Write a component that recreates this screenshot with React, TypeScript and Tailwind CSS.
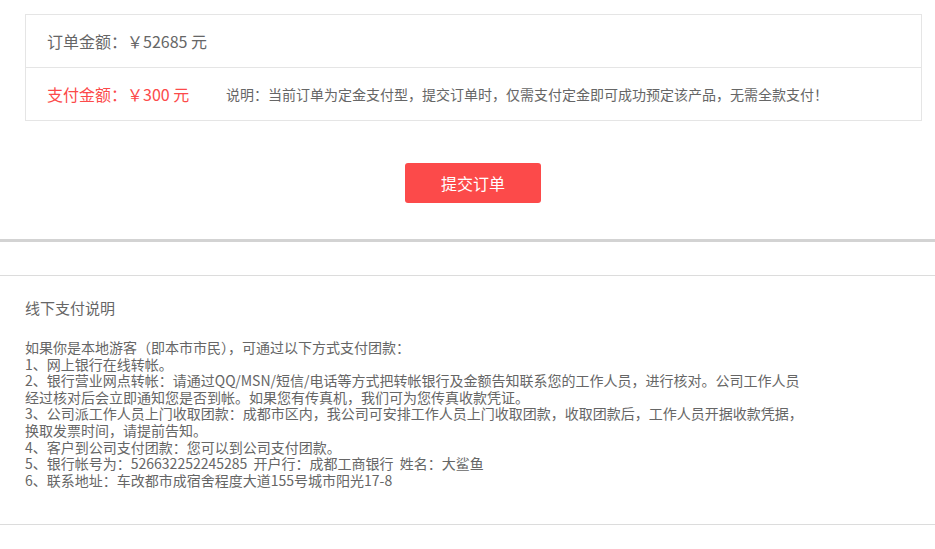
export default function App() {
  const lines = [
    '如果你是本地游客（即本市市民），可通过以下方式支付团款：',
    '1、网上银行在线转帐。',
    '2、银行营业网点转帐：请通过QQ/MSN/短信/电话等方式把转帐银行及金额告知联系您的工作人员，进行核对。公司工作人员',
    '经过核对后会立即通知您是否到帐。如果您有传真机，我们可为您传真收款凭证。',
    '3、公司派工作人员上门收取团款：成都市区内，我公司可安排工作人员上门收取团款，收取团款后，工作人员开据收款凭据，',
    '换取发票时间，请提前告知。',
    '4、客户到公司支付团款：您可以到公司支付团款。',
    '5、银行帐号为：526632252245285  开户行：成都工商银行  姓名：大鲨鱼',
    '6、联系地址：车改都市成宿舍程度大道155号城市阳光17-8',
  ];

  return (
    <div
      className="w-[935px] h-[549px] overflow-hidden bg-white text-[#666]"
      style={{ fontFamily: '"Microsoft YaHei", "Noto Sans CJK SC", "Liberation Sans", sans-serif' }}
    >
      {/* Order amounts */}
      <div className="pt-[14px] pl-[25px]">
        <div className="w-[897px] border border-[#e5e5e5]">
          <div className="h-[53px] flex items-center px-[21px] border-b border-[#e5e5e5] text-[16px]">
            订单金额：￥52685 元
          </div>
          <div className="h-[52px] flex items-center px-[21px]">
            <span className="text-[16px] text-[#fc4a4a] w-[179px]">支付金额：￥300 元</span>
            <span className="text-[14px] text-[#666]">
              说明：当前订单为定金支付型，提交订单时，仅需支付定金即可成功预定该产品，无需全款支付！
            </span>
          </div>
        </div>
      </div>

      {/* Submit */}
      <div className="flex justify-center pl-[11px] mt-[42px]">
        <button className="w-[136px] h-[40px] rounded-[3px] bg-[#fc4a4a] text-white text-[16px]">
          提交订单
        </button>
      </div>

      <div className="mt-[36px] border-t-[3px] border-[#d3d3d3]" />

      {/* Offline payment */}
      <div className="mt-[33px] border-t border-[#dcdcdc] pb-[36px] border-b">
        <div className="px-[25px] pt-[22px]">
          <h3 className="text-[15px] leading-[20px] text-[#666]">线下支付说明</h3>
          <div className="mt-[21px] text-[14px] leading-[16.6px] text-[#666]">
            {lines.map((l) => (
              <p key={l} className="whitespace-pre">{l}</p>
            ))}
          </div>
        </div>
      </div>
    </div>
  );
}
